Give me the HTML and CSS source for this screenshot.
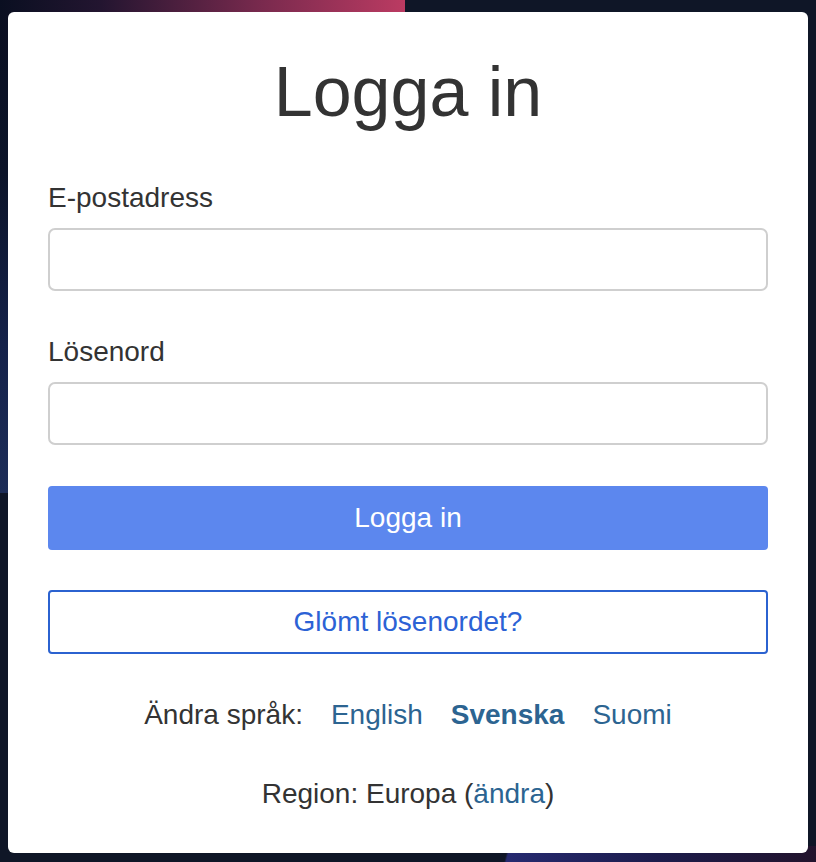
FILE: index.html
```html
<!DOCTYPE html>
<html lang="sv">
<head>
<meta charset="utf-8">
<title>Logga in</title>
<link rel="stylesheet" href="styles.css">
</head>
<body>
<main class="card">
  <h1 class="title">Logga in</h1>
  <form class="form">
    <label class="label" for="email">E-postadress</label>
    <input class="input" id="email" type="email">
    <label class="label label-gap" for="pw">Lösenord</label>
    <input class="input" id="pw" type="password">
    <button class="btn btn-primary" type="button">Logga in</button>
    <button class="btn btn-outline" type="button">Glömt lösenordet?</button>
  </form>
  <div class="row lang">
    <span>Ändra språk:</span>
    <a class="link" href="#">English</a>
    <a class="link bold" href="#">Svenska</a>
    <a class="link" href="#">Suomi</a>
  </div>
  <div class="row region">Region: Europa (<a class="link" href="#">ändra</a>)</div>
</main>
</body>
</html>
```
FILE: styles.css
```css
html, body {
  margin: 0;
  padding: 0;
}
body {
  width: 816px;
  height: 862px;
  overflow: hidden;
  font-family: "Liberation Sans", Arial, Helvetica, sans-serif;
  color: #333;
  background:
    linear-gradient(to right, #0a0f21 0%, #231530 25%, #7a2a4e 65%, #bb3b62 100%) 0 0 / 405px 60px no-repeat,
    linear-gradient(to bottom, #0a1022 0%, #0c1429 35%, #15224a 70%, #1d2d58 100%) 0 0 / 40px 493px no-repeat,
    linear-gradient(105deg, transparent 0, transparent 8px, #262a70 10px, #1c1c4c 50%, #22132c 100%) 500px 846px / 316px 16px no-repeat,
    #0f1627;
  padding-top: 12px;
  box-sizing: border-box;
}
.card {
  margin: 0 8px;
  width: 800px;
  box-sizing: border-box;
  background: #fff;
  border-radius: 6px;
  padding: 40px 40px 41px;
}
.title {
  margin: 0 0 46px;
  font-size: 70px;
  line-height: 80px;
  font-weight: 400;
  text-align: center;
  color: #333;
}
.form {
  display: flex;
  flex-direction: column;
}
.label {
  font-size: 28px;
  line-height: 40px;
  margin-bottom: 10px;
}
.label-gap {
  margin-top: 41px;
}
.input {
  height: 63px;
  box-sizing: border-box;
  border: 2px solid #cfcfcf;
  border-radius: 7px;
  background: #fff;
  margin: 0;
  padding: 0 16px;
  font: inherit;
  font-size: 28px;
}
.btn {
  height: 64px;
  box-sizing: border-box;
  border-radius: 4px;
  font-family: inherit;
  font-size: 28px;
  margin: 0;
  padding: 0;
  cursor: pointer;
}
.btn-primary {
  margin-top: 41px;
  background: #5c87ee;
  border: none;
  color: #fff;
}
.btn-outline {
  margin-top: 40px;
  background: #fff;
  border: 2px solid #2b62d0;
  color: #2c62d5;
}
.row {
  font-size: 28px;
  line-height: 36px;
  text-align: center;
}
.lang {
  margin-top: 43px;
  display: flex;
  justify-content: center;
  gap: 28px;
}
.region {
  margin-top: 43px;
}
.link {
  color: #2c6491;
  text-decoration: none;
}
.bold {
  font-weight: 700;
}
```
